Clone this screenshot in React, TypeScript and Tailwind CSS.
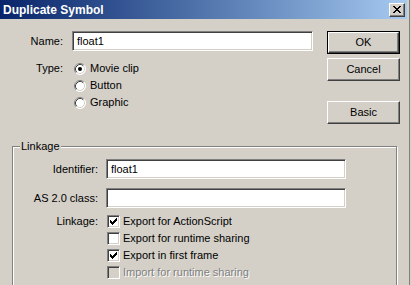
import React from 'react';

const font = { fontFamily: '"Liberation Sans", Arial, sans-serif' };

const Radio = ({ checked }: { checked?: boolean }) => (
  <svg width="12" height="12" viewBox="0 0 12 12" className="shrink-0">
    <circle cx="6" cy="6" r="5.5" fill="#fff" />
    <path d="M2.11 9.89 A5.5 5.5 0 0 1 9.89 2.11" fill="none" stroke="#808080" />
    <path d="M9.89 2.11 A5.5 5.5 0 0 1 2.11 9.89" fill="none" stroke="#fff" />
    <path d="M2.82 9.18 A4.5 4.5 0 0 1 9.18 2.82" fill="none" stroke="#404040" />
    <path d="M9.18 2.82 A4.5 4.5 0 0 1 2.82 9.18" fill="none" stroke="#d4d0c8" />
    {checked && <circle cx="6" cy="6" r="2" fill="#000" />}
  </svg>
);

const Check = ({ checked, disabled }: { checked?: boolean; disabled?: boolean }) => (
  <div
    className={`w-[13px] h-[13px] shrink-0 border border-t-[#808080] border-l-[#808080] border-b-white border-r-white shadow-[inset_1px_1px_0_#404040,inset_-1px_-1px_0_#d4d0c8] ${
      disabled ? 'bg-[#d4d0c8]' : 'bg-white'
    } flex items-center justify-center`}
  >
    {checked && (
      <svg width="7" height="7" viewBox="0 0 7 7">
        <path d="M0 2h1v1h1v1h1v-1h1v-1h1v-1h1v-1h1v3h-1v1h-1v1h-1v1h-1v1h-1v-1h-1v-1h-1v-1h-1z" fill="#000" />
      </svg>
    )}
  </div>
);

const Input = ({ value, width }: { value?: string; width: string }) => (
  <div
    className={`${width} h-[20px] bg-white border border-t-[#808080] border-l-[#808080] border-b-white border-r-white shadow-[inset_1px_1px_0_#404040,inset_-1px_-1px_0_#d4d0c8] flex items-center pl-[4px] text-[11px] text-black`}
  >
    {value}
  </div>
);

const Button = ({ label, isDefault }: { label: string; isDefault?: boolean }) => (
  <div className={`w-[73px] h-[23px] ${isDefault ? 'border border-black' : ''}`}>
    <div className="w-full h-full border border-t-white border-l-white border-b-[#404040] border-r-[#404040] shadow-[inset_-1px_-1px_0_#808080] flex items-center justify-center text-[11px] text-black">
      {label}
    </div>
  </div>
);

export default function App() {
  return (
    <div className="w-[411px] h-[285px] overflow-hidden bg-[#d4d0c8] select-none" style={font}>
      <div className="w-[410px] h-full border-r border-[#808080]">
        {/* title bar */}
        <div className="w-[407px] h-[19px] bg-gradient-to-r from-[#0a246a] to-[#a6caf0] flex items-center justify-between pl-[3px] pr-[2px]">
          <span className="text-white font-bold text-[12px] leading-none">Duplicate Symbol</span>
          <div className="w-[16px] h-[14px] bg-[#d4d0c8] border border-t-white border-l-white border-b-[#404040] border-r-[#404040] shadow-[inset_-1px_-1px_0_#808080] flex items-center justify-center">
            <svg width="8" height="7" viewBox="0 0 8 7">
              <path d="M0 0h2v1h1v1h2v-1h1v-1h2v1h-1v1h-1v1h-1v1h1v1h1v1h1v1h-2v-1h-1v-1h-2v1h-1v1h-2v-1h1v-1h1v-1h1v-1h-1v-1h-1v-1h-1z" fill="#000" />
            </svg>
          </div>
        </div>

        {/* top section */}
        <div className="flex pt-[12px]">
          <div className="w-[327px]">
            <div className="flex items-center">
              <span className="w-[64px] text-right text-[11px] text-black pr-[1px]">Name:</span>
              <div className="ml-[8px]">
                <Input value="float1" width="w-[241px]" />
              </div>
            </div>
            <div className="flex mt-[9px]">
              <span className="w-[64px] text-right text-[11px] text-black pr-[1px] h-[17px] flex items-center justify-end">Type:</span>
              <div className="ml-[10px] flex flex-col">
                {[
                  { label: 'Movie clip', checked: true },
                  { label: 'Button' },
                  { label: 'Graphic' },
                ].map((r) => (
                  <div key={r.label} className="h-[17px] flex items-center gap-[4px] text-[11px] text-black">
                    <Radio checked={r.checked} />
                    <span>{r.label}</span>
                  </div>
                ))}
              </div>
            </div>
          </div>
          <div className="flex flex-col">
            <Button label="OK" isDefault />
            <div className="mt-[4px]">
              <Button label="Cancel" />
            </div>
            <div className="mt-[20px]">
              <Button label="Basic" />
            </div>
          </div>
        </div>

        {/* linkage group */}
        <div className="relative ml-[12px] mt-[22px] w-[385px] h-[160px] border border-[#808080] shadow-[inset_1px_1px_0_#fff,1px_1px_0_#fff]">
          <span className="absolute -top-[8px] left-[7px] px-[1px] bg-[#d4d0c8] text-[11px] text-black leading-[14px]">
            Linkage
          </span>
          <div className="pt-[12px]">
            <div className="flex items-center">
              <span className="w-[85px] text-right text-[11px] text-black">Identifier:</span>
              <div className="ml-[8px]">
                <Input value="float1" width="w-[240px]" />
              </div>
            </div>
            <div className="flex items-center mt-[9px]">
              <span className="w-[85px] text-right text-[11px] text-black">AS 2.0 class:</span>
              <div className="ml-[8px]">
                <Input width="w-[240px]" />
              </div>
            </div>
            <div className="flex mt-[5px]">
              <span className="w-[85px] text-right text-[11px] text-black h-[17px] flex items-center justify-end">Linkage:</span>
              <div className="ml-[9px] flex flex-col">
                {[
                  { label: 'Export for ActionScript', checked: true },
                  { label: 'Export for runtime sharing' },
                  { label: 'Export in first frame', checked: true },
                  { label: 'Import for runtime sharing', disabled: true },
                ].map((c) => (
                  <div key={c.label} className="h-[17px] flex items-center gap-[3px] text-[11px]">
                    <Check checked={c.checked} disabled={c.disabled} />
                    <span
                      className={c.disabled ? 'text-[#808080] [text-shadow:1px_1px_0_#fff]' : 'text-black'}
                    >
                      {c.label}
                    </span>
                  </div>
                ))}
              </div>
            </div>
          </div>
        </div>
      </div>
    </div>
  );
}
